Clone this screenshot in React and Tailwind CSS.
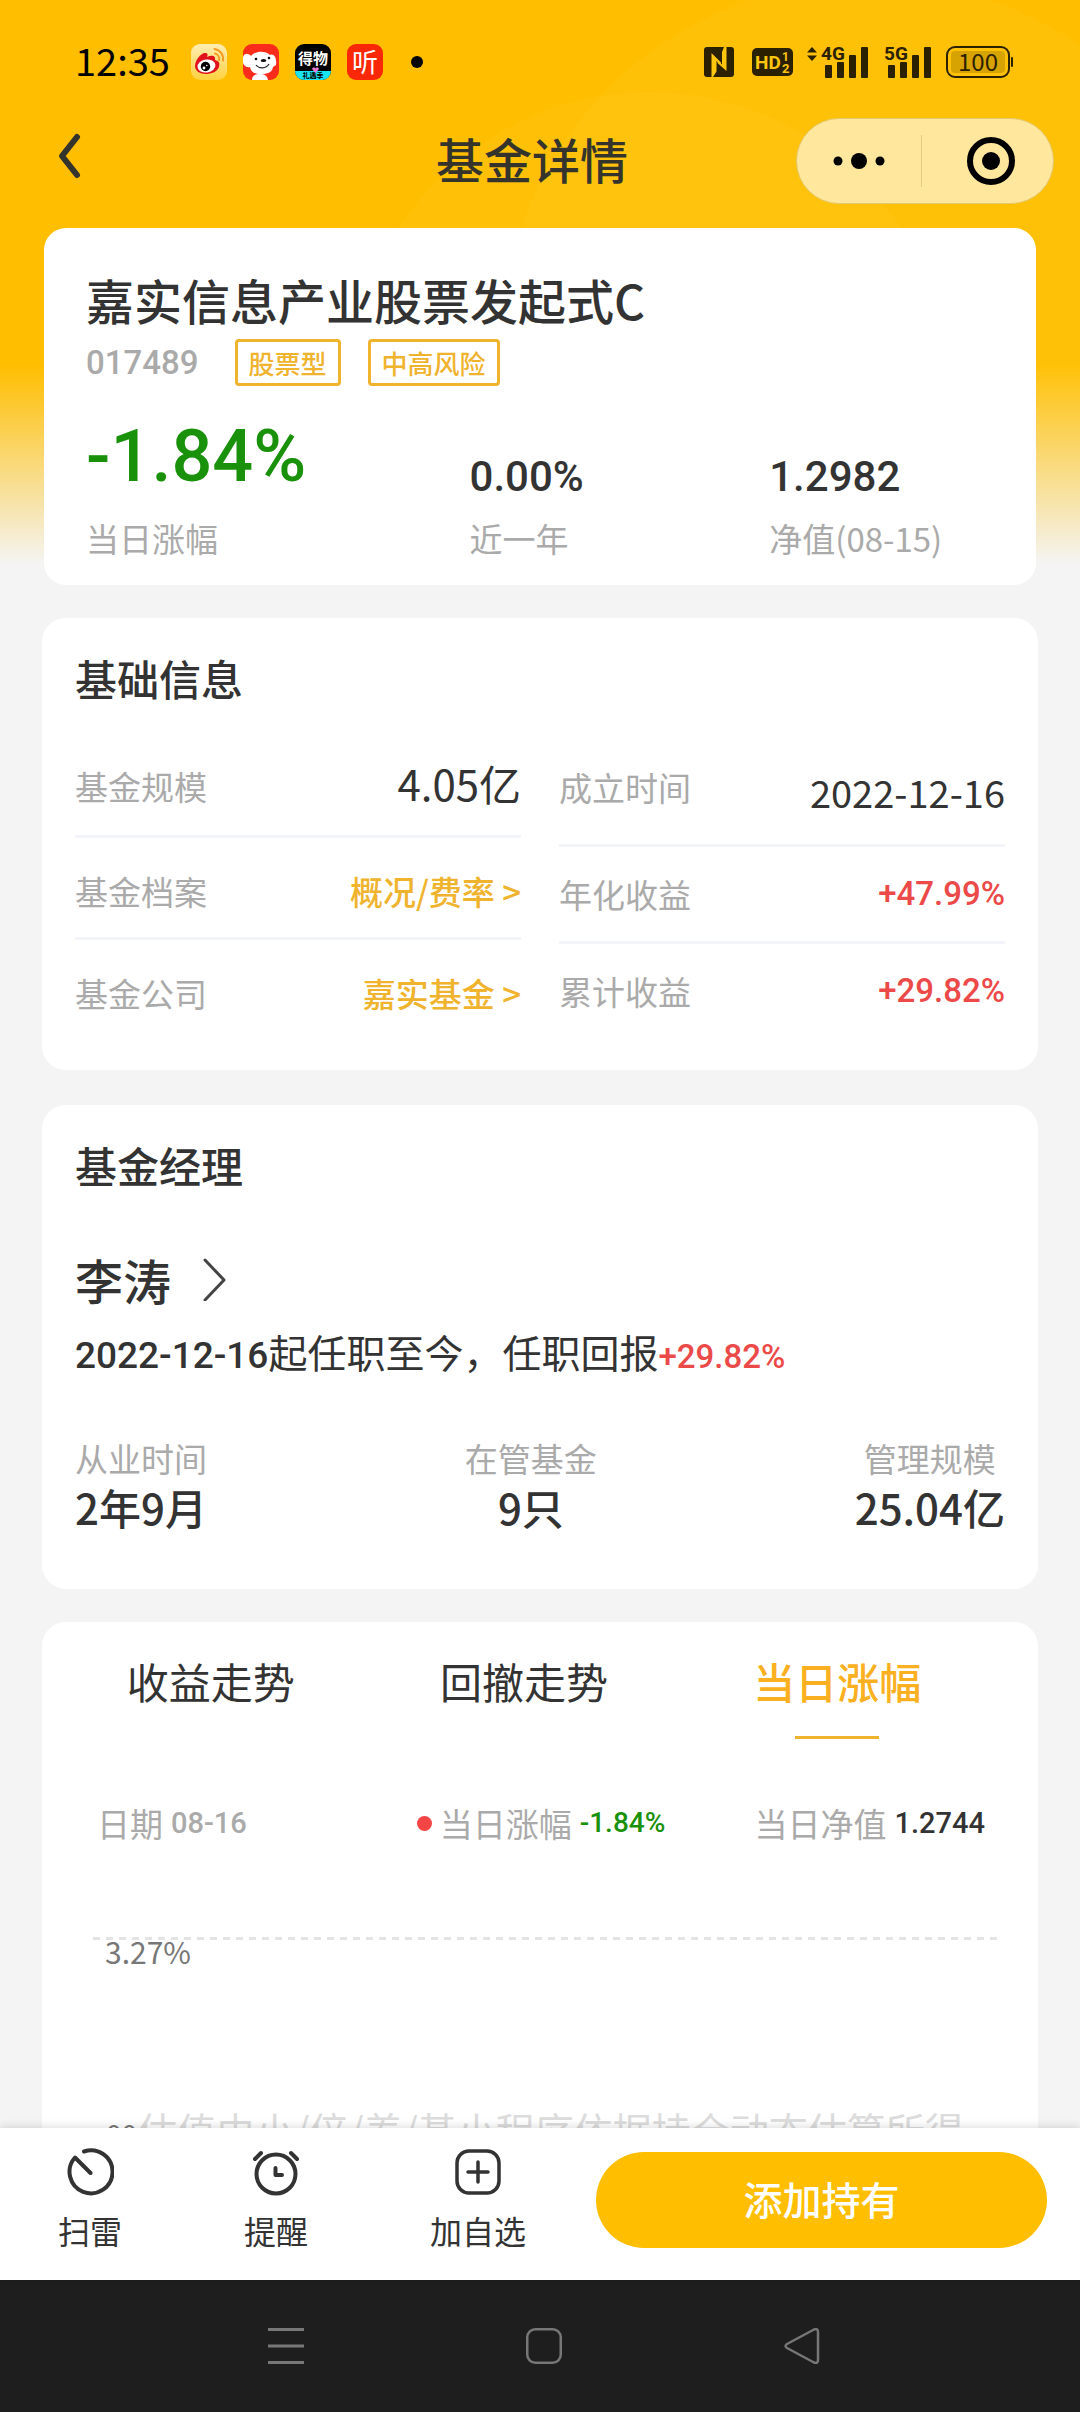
const num = 'font-[Roboto,sans-serif] font-medium';

// left column of the basic info card
const leftInfo = [
  { label: '基金规模', value: '4.05亿' },
  { label: '基金档案', value: '概况/费率 >', link: true },
  { label: '基金公司', value: '嘉实基金 >', link: true },
];

// right column of the basic info card
const rightInfo = [
  { label: '成立时间', value: '2022-12-16' },
  { label: '年化收益', value: '+47.99%', rise: true },
  { label: '累计收益', value: '+29.82%', rise: true },
];

const managerStats = [
  { label: '从业时间', value: '2年9月' },
  { label: '在管基金', value: '9只' },
  { label: '管理规模', value: '25.04亿' },
];

const tabs = ['收益走势', '回撤走势', '当日涨幅'];

function Signal({ label, arrows }) {
  return (
    <svg width={arrows ? 62 : 48} height="36" viewBox={arrows ? '-14 0 62 36' : '0 0 48 36'} fill="#2b2000">
      {arrows && <path d="M-9 3 L-4 8.500 H-14 Z M-9 17 L-4 11.500 H-14 Z" />}
      <text x="0" y="16" fontSize="19" fontWeight="700" fontFamily="Roboto, sans-serif">
        {label}
      </text>
      <rect x="4" y="21" width="7" height="13" rx="1" />
      <rect x="16" y="18" width="7" height="16" rx="1" />
      <rect x="28" y="11" width="7" height="23" rx="1" />
      <rect x="40" y="3" width="7" height="31" rx="1" />
    </svg>
  );
}

function StatusBar() {
  return (
    <div className="flex items-center h-[118px] pt-[6px] pl-[75px] pr-[66px]">
      <span className="pb-1 text-[38px] leading-[40px] text-black">12:35</span>

      {/* notification icons */}
      <div className="flex items-center gap-4 ml-[21px]">
        <svg width="36" height="36" viewBox="0 0 36 36">
          <defs>
            <linearGradient id="weibo" x1="0" y1="0" x2="0" y2="1">
              <stop offset="0" stopColor="#ffedb4" />
              <stop offset="1" stopColor="#ffd23e" />
            </linearGradient>
          </defs>
          <rect width="36" height="36" rx="9" fill="url(#weibo)" />
          <path d="M4 22 C4 16 10 9 14 9 C17 9 17 11 16 13 C20 11 25 11 24 16 C28 17 29 19 28 23 C26 28 20 30 15 30 C9 30 4 27 4 22 Z" fill="#e1121b" />
          <ellipse cx="15.500" cy="22" rx="9" ry="6.500" fill="#fff" transform="rotate(-8 15.500 22)" />
          <circle cx="14.500" cy="22.500" r="4.700" fill="#000" />
          <circle cx="13" cy="24" r="1.400" fill="#fff" />
          <circle cx="15.800" cy="21.500" r=".8" fill="#fff" />
          <path d="M24 9.500 A5.500 5.500 0 0 1 28 16 M23.500 5 A10 10 0 0 1 32 16.500" fill="none" stroke="#f59b23" strokeWidth="2" strokeLinecap="round" />
        </svg>
        <svg width="36" height="36" viewBox="0 0 36 36">
          <rect width="36" height="36" rx="9" fill="#fb2c1c" />
          <path d="M0 13 C2 8 6 10 8 12 C12 7 22 6 27 11 C31 9 34 14 33 21 L30 23 C29 29 24 30 18 30 C11 30 8 28 7 23 C4 24 1 22 0 19 Z" fill="#fff" />
          <path d="M9 36 C9 31 13 30 17 30 C21 30 24 31 25 36 Z" fill="#fff" />
          <path d="M13 21 C16 25 23 25 26 20" fill="none" stroke="#222" strokeWidth="1.200" />
          <ellipse cx="20.500" cy="16.500" rx="2.800" ry="1.600" fill="#111" />
          <circle cx="13" cy="15" r="1.300" fill="#111" />
          <circle cx="26" cy="14" r="1.300" fill="#111" />
        </svg>
        <div className="relative flex flex-col w-9 h-9 overflow-hidden rounded-[9px] bg-black text-center text-white">
          <span className="h-[27px] text-[15px] leading-[27px] font-bold">得物</span>
          <span className="h-[9px] bg-[#19e6f5] text-[7px] leading-[9px] font-bold text-black">礼遇季</span>
          <svg className="absolute left-[17px] top-[23px]" width="7" height="6" viewBox="0 0 7 6" fill="#e87ad6">
            <path d="M3.500 6 L0 2 Q1.500 -1 3.500 1.500 Q5.500 -1 7 2 Z" />
          </svg>
        </div>
        <div className="w-9 h-9 rounded-[9px] bg-[#fa2806] text-center text-[26px] leading-[34px] text-white">
          听
        </div>
      </div>
      <span className="w-3 h-3 ml-7 rounded-full bg-black" />

      {/* system icons */}
      <div className="flex items-center ml-auto">
        <svg width="30" height="30" viewBox="0 0 30 30">
          <rect width="30" height="30" rx="3" fill="#2b2000" />
          <path d="M7.500 30 V6 L17 15.500 V17.500 L12.500 14 V24.500 L9 30 Z" fill="#ffc60d" />
          <path d="M22.500 0 V24 L13.500 16 V14 L18 17.500 V5 L20 0 Z" fill="#ffc60d" />
        </svg>
        <svg className="ml-[18px]" width="41" height="30" viewBox="0 0 41 30">
          <rect y="1" width="41" height="28" rx="5" fill="#2b2000" />
          <g fill="#ffc60d" fontFamily="Roboto, sans-serif" fontWeight="700">
            <text x="3" y="22" fontSize="19">HD</text>
            <text x="30" y="14" fontSize="12">1</text>
            <text x="30" y="26" fontSize="13">2</text>
          </g>
        </svg>
        <div className="flex ml-[14px] gap-[15px]">
          <Signal label="4G" arrows />
          <Signal label="5G" />
        </div>
        <svg className="ml-[14px]" width="68" height="32" viewBox="0 0 68 32">
          <rect x="1" y="1" width="62" height="30" rx="8" fill="none" stroke="#2b2000" strokeWidth="2" />
          <rect x="5" y="5" width="54" height="22" rx="4" fill="#d7a303" />
          <rect x="65" y="11" width="2" height="10" rx="1" fill="#2b2000" />
          <text x="32" y="25" textAnchor="middle" fontSize="24" fill="#2b2000">100</text>
        </svg>
      </div>
    </div>
  );
}

function NavHeader() {
  return (
    <header className="grid grid-cols-[1fr_auto_1fr] items-center h-[85px] pl-[10px] pr-[26px]">
      <button type="button" aria-label="返回" className="justify-self-start pl-[47px] pb-[10px]">
        <svg width="26" height="48" viewBox="0 0 26 48" fill="none" stroke="#35342c" strokeWidth="6" strokeLinecap="round" strokeLinejoin="round">
          <path d="M20 5 L5 24 L20 43" />
        </svg>
      </button>
      <h1 className="text-[48px] leading-[64px] font-medium text-[#35342c] pb-[6px]">基金详情</h1>
      <div className="flex items-center justify-self-end w-[258px] h-[86px] rounded-full border border-[#e3c870] bg-[#ffe79d]">
        <button type="button" aria-label="更多" className="flex flex-1 justify-center">
          <svg width="52" height="18" viewBox="0 0 52 18">
            <circle cx="5" cy="9" r="4.500" />
            <circle cx="26" cy="9" r="8" />
            <circle cx="47" cy="9" r="4.500" />
          </svg>
        </button>
        <span className="w-px h-[52px] bg-[#e3cb83]" />
        <button type="button" aria-label="关闭" className="flex flex-1 justify-center pl-2">
          <svg width="48" height="48" viewBox="0 0 48 48">
            <circle cx="24" cy="24" r="21" fill="none" stroke="#000" strokeWidth="6" />
            <circle cx="24" cy="24" r="9" />
          </svg>
        </button>
      </div>
    </header>
  );
}

function SummaryCard() {
  return (
    <section className="mx-[44px] mt-[25px] px-[42px] pt-[39px] pb-[25px] rounded-[22px] bg-white">
      <h2 className="text-[48px] leading-[64px] font-medium text-[#333]">嘉实信息产业股票发起式C</h2>
      <div className="flex items-center mt-2">
        <span className={`${num} text-[33px] leading-[44px] text-[#aaa]`}>017489</span>
        <span className="ml-9 px-[11px] rounded-[4px] border-[3px] border-[#f0b32d] text-[26px] leading-[41px] font-medium text-[#f0b32d]">
          股票型
        </span>
        <span className="ml-[27px] px-[11px] rounded-[4px] border-[3px] border-[#f0b32d] text-[26px] leading-[41px] font-medium text-[#f0b32d]">
          中高风险
        </span>
      </div>

      <div className="grid grid-cols-[384fr_300fr_225fr] items-end mt-[21px] text-[33px] leading-[44px] text-[#aaa]">
        <div>
          <p className={`${num} mb-[9px] text-[72px] leading-[100px] text-[#1a910b]`}>-1.84%</p>
          <p>当日涨幅</p>
        </div>
        <div>
          <p className={`${num} mb-[9px] text-[42px] leading-[60px] text-[#333]`}>0.00%</p>
          <p>近一年</p>
        </div>
        <div>
          <p className={`${num} mb-[9px] text-[42px] leading-[60px] text-[#333]`}>1.2982</p>
          <p>净值(08-15)</p>
        </div>
      </div>
    </section>
  );
}

function BasicInfo() {
  return (
    <section className="mx-[42px] mt-[33px] px-[33px] pt-7 pb-[31px] rounded-[24px] bg-white">
      <h2 className="text-[42px] leading-[64px] font-medium text-[#333]">基础信息</h2>
      <div className="grid grid-cols-2 gap-[38px] mt-5 text-[33px]">
        <div>
          {leftInfo.map((item, idx) => (
            <div
              key={item.label}
              className={`flex items-center justify-between pt-[28px] pb-[21px] border-[#f3f4f9] leading-[50px] ${idx < 2 ? 'border-b-[3px]' : ''}`}
            >
              <span className="text-[#aaa]">{item.label}</span>
              {item.link ? (
                <a href="#" className="font-medium text-[#f0b32d]">{item.value}</a>
              ) : (
                <span className="pb-[6px] text-[42px] text-[#333]">{item.value}</span>
              )}
            </div>
          ))}
        </div>
        <div>
          {rightInfo.map((item, idx) => (
            <div
              key={item.label}
              className={`flex items-center justify-between pt-[25px] pb-[25px] border-[#f3f4f9] leading-[44px] ${idx < 2 ? 'border-b-[3px]' : ''}`}
            >
              <span className="text-[#aaa]">{item.label}</span>
              {item.rise ? (
                <span className={`${num} text-[33px] text-[#ec4949]`}>{item.value}</span>
              ) : (
                <span className="pt-[10px] text-[38px] leading-[54px] text-[#333]">{item.value}</span>
              )}
            </div>
          ))}
        </div>
      </div>
    </section>
  );
}

function Manager() {
  return (
    <section className="mx-[42px] mt-[35px] px-[33px] pt-7 pb-[55px] rounded-[24px] bg-white text-[#333]">
      <h2 className="text-[42px] leading-[64px] font-medium">基金经理</h2>
      <a href="#" className="flex items-center gap-[30px] mt-[50px] text-[48px] leading-[64px] font-medium">
        李涛
        <svg width="26" height="44" viewBox="0 0 26 44" fill="none" stroke="#444" strokeWidth="3" strokeLinecap="round" strokeLinejoin="round">
          <path d="M4 3 L23 23 L4 43" />
        </svg>
      </a>
      <p className="mt-[10px] text-[39px] leading-[60px] whitespace-nowrap">
        <span className={`${num} text-[37px] leading-[40px]`}>2022-12-16</span>
        起任职至今，任职回报
        <span className={`${num} text-[33px] leading-[40px] text-[#ec4949]`}>+29.82%</span>
      </p>
      <div className="flex justify-between mt-[55px] text-center">
        {managerStats.map((item) => (
          <div key={item.label}>
            <p className="text-[33px] leading-[44px] text-[#aaa]">{item.label}</p>
            <p className="text-[42px] leading-[54px] font-medium">{item.value}</p>
          </div>
        ))}
      </div>
    </section>
  );
}

function Trend() {
  return (
    <section className="mx-[42px] mt-[33px] pt-[27px] rounded-t-[24px] bg-white text-[#333]">
      <div role="tablist" className="grid grid-cols-3 pl-[12px] pr-[44px]">
        {tabs.map((tab) => (
          <button
            key={tab}
            type="button"
            role="tab"
            aria-selected={tab === '当日涨幅'}
            className="flex flex-col items-center gap-[23px] text-[42px] leading-[64px] aria-selected:font-medium aria-selected:text-[#fbb021]"
          >
            {tab}
            {tab === '当日涨幅' && <span className="w-[84px] h-[3px] bg-[#f0b32d]" />}
          </button>
        ))}
      </div>

      <div className="grid grid-cols-[1fr_auto_1fr] items-center mt-[62px] pl-[55px] pr-[53px] text-[33px] leading-[44px] text-[#aaa]">
        <p className="flex items-center gap-2">
          日期
          <span className={`${num} text-[29px]`}>08-16</span>
        </p>
        <p className="flex items-center gap-2">
          <span className="w-[15px] h-[15px] rounded-full bg-[#f54545]" />
          当日涨幅
          <span className={`${num} text-[28px] text-[#1a910b]`}>-1.84%</span>
        </p>
        <p className="flex items-center justify-end gap-2">
          当日净值
          <span className={`${num} text-[29px] text-[#333]`}>1.2744</span>
        </p>
      </div>

      {/* chart area */}
      <div className="mt-[92px] pl-[51px] pr-[40px]">
        <svg className="w-full h-[3px]">
          <line x1="0" y1="1.500" x2="100%" y2="1.500" stroke="#e4e4e4" strokeWidth="3" strokeDasharray="7 6" />
        </svg>
        <p className="pl-[12px] text-[30px] leading-[22px] text-[#777]">3.27%</p>
        <div className="flex items-center mt-[138px] pl-[13px] leading-[50px] whitespace-nowrap">
          <span className="w-8 pt-2 text-[28px] text-[#777]">00</span>
          <span className="text-[39px] text-[#dcdcdc]">估值由小/倍/养/基小程序依据持仓动态估算所得</span>
        </div>
      </div>
    </section>
  );
}

function ActionBar() {
  return (
    <footer className="relative flex items-center shrink-0 h-[152px] pl-[58px] pr-[33px] pb-2 bg-white text-[32px] leading-[44px] text-[#333] shadow-[0_-2px_8px_rgba(0,0,0,0.12)]">
      <div className="flex gap-[122px]">
        <button type="button" className="flex flex-col items-center gap-3">
          <svg width="48" height="48" viewBox="0 0 48 48" fill="none" stroke="#333" strokeWidth="4" strokeLinecap="round" strokeLinejoin="round">
            <path d="M18 3.500 A21.500 21.500 0 1 1 9 9.500 L24.500 25" />
          </svg>
          扫雷
        </button>
        <button type="button" className="flex flex-col items-center gap-3">
          <svg width="48" height="48" viewBox="0 0 48 48" fill="none" stroke="#333" strokeWidth="4" strokeLinecap="round" strokeLinejoin="round">
            <circle cx="24" cy="26" r="19.500" />
            <path d="M3 11 L9 5 M39 5 L45 11" />
            <path d="M23.500 20 V27 H30" />
          </svg>
          提醒
        </button>
        <button type="button" className="flex flex-col items-center gap-3">
          <svg width="48" height="48" viewBox="0 0 48 48" fill="none" stroke="#333" strokeWidth="3.500" strokeLinecap="round">
            <rect x="3" y="3" width="42" height="42" rx="12" />
            <path d="M14 24 H34 M24 14 V34" />
          </svg>
          加自选
        </button>
      </div>
      <button type="button" className="flex-1 h-24 ml-[70px] pb-1 rounded-full bg-[#ffbe00] text-[39px] font-medium text-white">
        添加持有
      </button>
    </footer>
  );
}

function SystemNav() {
  return (
    <nav className="flex items-center justify-center gap-[222px] shrink-0 h-[132px] pl-2 bg-[#1e1e1e]">
      <button type="button" aria-label="菜单">
        <svg width="36" height="36" viewBox="0 0 36 36" stroke="#777" strokeWidth="3">
          <path d="M0 1.500 H36 M0 18 H36 M0 34.500 H36" />
        </svg>
      </button>
      <button type="button" aria-label="主页">
        <svg width="36" height="36" viewBox="0 0 36 36" fill="none" stroke="#777" strokeWidth="2.500">
          <rect x="1.250" y="1.250" width="33.500" height="33.500" rx="8" />
        </svg>
      </button>
      <button type="button" aria-label="后退">
        <svg width="36" height="36" viewBox="0 0 36 36" fill="none" stroke="#777" strokeWidth="2.500" strokeLinejoin="round">
          <path d="M30 1.500 Q34 0 34 4 V32 Q34 36 30 34.500 L3 20 Q0 18 3 16 Z" />
        </svg>
      </button>
    </nav>
  );
}

export default function App() {
  return (
    <div className="flex flex-col h-screen overflow-hidden bg-[#f4f4f4] font-['Noto_Sans_CJK_SC',sans-serif]">
      <main className="flex-1 min-h-0 overflow-hidden">
        <div className="relative bg-[#ffbe00]">
          {/* light circles behind the header */}
          <svg className="absolute right-0 top-0" width="720" height="585" viewBox="360 0 720 585" fill="#fff176">
            <circle cx="870" cy="350" r="370" opacity="0.07" />
            <circle cx="650" cy="392" r="300" opacity="0.06" />
          </svg>
          <div className="relative bg-[linear-gradient(to_bottom,rgba(244,244,244,0)_365px,#f4f4f4_565px)]">
            <StatusBar />
            <NavHeader />
            <SummaryCard />
          </div>
        </div>
        <BasicInfo />
        <Manager />
        <Trend />
      </main>
      <ActionBar />
      <SystemNav />
    </div>
  );
}
